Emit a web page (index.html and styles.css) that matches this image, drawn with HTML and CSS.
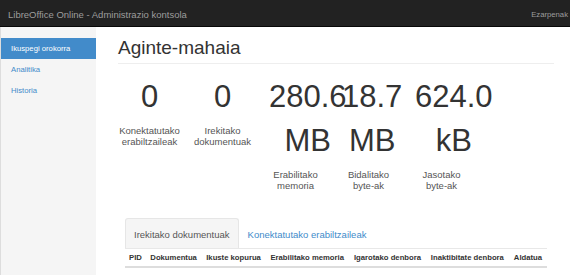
FILE: index.html
```html
<!DOCTYPE html>
<html lang="eu">
<head>
    <meta charset="UTF-8">
    <meta name="viewport" content="width=device-width, initial-scale=1.0">
    <title>LibreOffice Online - Administrazio kontsola</title>
    <link rel="stylesheet" href="styles.css">
</head>
<body>
    <nav class="navbar">
        <span class="brand">LibreOffice Online - Administrazio kontsola</span>
        <a class="nav-link" href="#">Ezarpenak</a>
    </nav>

    <div class="layout">
        <aside class="sidebar">
            <ul class="nav-sidebar">
                <li class="active"><a href="#">Ikuspegi orokorra</a></li>
                <li><a href="#">Analitika</a></li>
                <li><a href="#">Historia</a></li>
            </ul>
        </aside>

        <main class="main">
            <h1 class="page-header">Aginte-mahaia</h1>

            <div class="placeholders">
                <div class="placeholder">
                    <div class="stat-value">0</div>
                    <div class="stat-label">Konektatutako erabiltzaileak</div>
                </div>
                <div class="placeholder">
                    <div class="stat-value">0</div>
                    <div class="stat-label">Irekitako dokumentuak</div>
                </div>
                <div class="placeholder">
                    <div class="stat-value">280.6 MB</div>
                    <div class="stat-label">Erabilitako memoria</div>
                </div>
                <div class="placeholder">
                    <div class="stat-value">18.7 MB</div>
                    <div class="stat-label">Bidalitako byte-ak</div>
                </div>
                <div class="placeholder">
                    <div class="stat-value">624.0 kB</div>
                    <div class="stat-label">Jasotako byte-ak</div>
                </div>
            </div>

            <div class="tab-wrap">
                <ul class="nav-tabs">
                    <li class="active"><a href="#">Irekitako dokumentuak</a></li>
                    <li><a href="#">Konektatutako erabiltzaileak</a></li>
                </ul>
                <table class="table">
                    <thead>
                        <tr>
                            <th>PID</th>
                            <th>Dokumentua</th>
                            <th>Ikuste kopurua</th>
                            <th>Erabilitako memoria</th>
                            <th>Igarotako denbora</th>
                            <th>Inaktibitate denbora</th>
                            <th>Aldatua</th>
                        </tr>
                    </thead>
                    <tbody></tbody>
                </table>
            </div>
        </main>
    </div>
</body>
</html>
```

FILE: styles.css
```css
html, body {
    margin: 0;
    padding: 0;
}
body {
    font-family: 'Liberation Sans', Arial, sans-serif;
    color: #333;
    background-color: white;
    height: 275px;
    overflow: hidden;
}
a {
    text-decoration: none;
}
ul {
    list-style: none;
    margin: 0;
    padding: 0;
}

/* barra goikoa */
.navbar {
    display: flex;
    align-items: center;
    justify-content: space-between;
    height: 26px;
    padding: 0 2px 0 8px;
    background-color: #222;
    border-bottom: 1px solid #080808;
}
.brand {
    color: #9d9d9d;
    font-size: 9.5px;
    line-height: 11px;
    padding-top: 2px;
}
.nav-link {
    color: #9d9d9d;
    font-size: 7.7px;
    line-height: 11px;
    padding-top: 2px;
}

.layout {
    display: flex;
    height: 248px;
}

/* alboko menua */
.sidebar {
    width: 95px;
    flex-shrink: 0;
    background-color: #f5f5f5;
    border-left: 1px solid #ddd;
    padding-top: 11px;
}
.nav-sidebar li a {
    display: block;
    height: 21px;
    line-height: 21px;
    padding-left: 10px;
    font-size: 7.7px;
    color: #428bca;
}
.nav-sidebar li.active a {
    background-color: #428bca;
    color: white;
}

.main {
    flex: 1;
    padding: 10px 16px 0 22px;
    min-width: 0;
}
.page-header {
    margin: 0 0 11px;
    padding-bottom: 5px;
    font-size: 19px;
    font-weight: normal;
    line-height: 21px;
    border-bottom: 1px solid #eee;
}

/* zenbakiak */
.placeholders {
    display: flex;
    margin-left: -5px;
}
.placeholder {
    width: 73px;
    flex-shrink: 0;
    box-sizing: border-box;
    padding: 0 10px;
    text-align: center;
}
.stat-value {
    display: inline-block;
    font-size: 31px;
    line-height: 44px;
    color: #333;
}
.stat-label {
    margin: 6px -4px 0;
    font-size: 9.5px;
    line-height: 11px;
    color: #555;
}

/* fitxak eta taula */
.tab-wrap {
    margin-top: 27px;
    padding: 0 7px;
}
.nav-tabs {
    display: flex;
}
.nav-tabs li a {
    display: block;
    padding: 10px 8px 8px;
    font-size: 9.5px;
    line-height: 11px;
    color: #428bca;
    border: 1px solid transparent;
    border-bottom: none;
    border-radius: 3px 3px 0 0;
}
.nav-tabs li.active a {
    color: #555;
    background-color: #f5f5f5;
    border-color: #e6e6e6;
}
.table {
    width: 100%;
    border-collapse: collapse;
    border-top: 1px solid #e8e8e8;
}
.table th {
    padding: 4px 4px 3px;
    font-size: 7.7px;
    line-height: 10px;
    text-align: left;
    white-space: nowrap;
    border-bottom: 2px solid #ddd;
}
```
